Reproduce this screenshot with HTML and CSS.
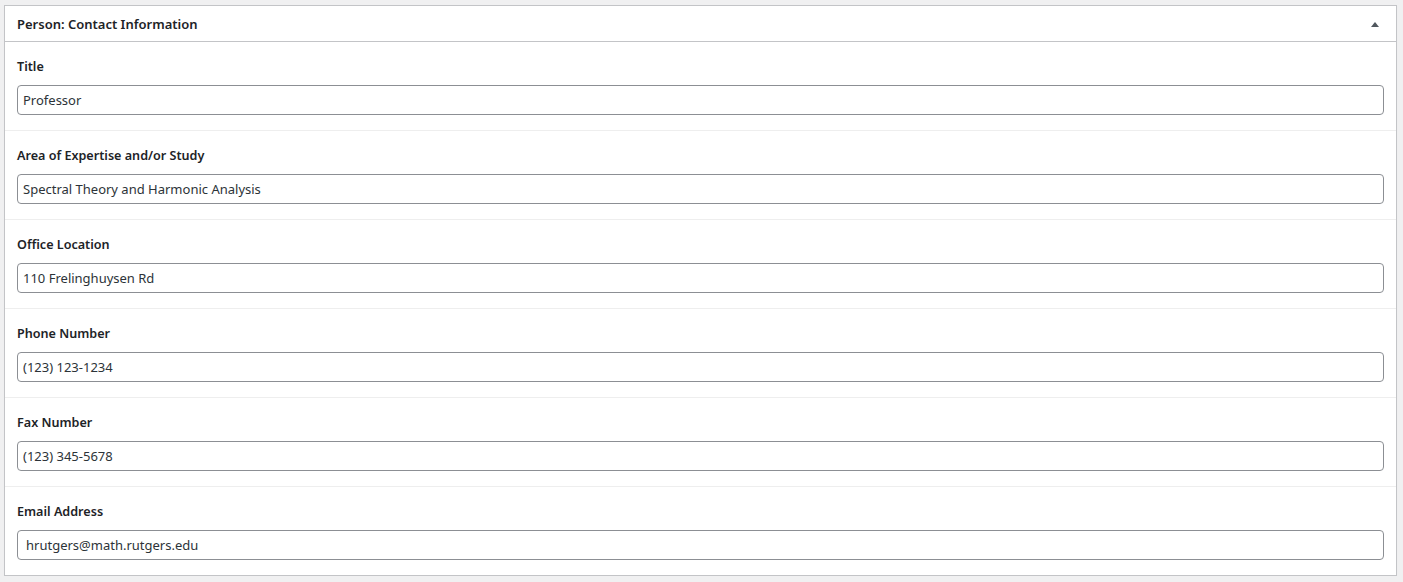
FILE: index.html
```html
<!DOCTYPE html>
<html lang="en">
<head>
<meta charset="utf-8">
<title>Person: Contact Information</title>
<link rel="stylesheet" href="styles.css">
</head>
<body>
<div class="postbox">
  <div class="postbox-header">
    <h2 class="hndle">Person: Contact Information</h2>
    <button class="toggle" type="button" aria-label="Toggle panel">
      <svg width="8" height="5" viewBox="0 0 8 5"><path d="M0 5 L4 0 L8 5 Z" fill="#50575e"/></svg>
    </button>
  </div>
  <div class="inside">
    <div class="field">
      <div class="label">Title</div>
      <input class="text" type="text" value="Professor">
    </div>
    <div class="field">
      <div class="label">Area of Expertise and/or Study</div>
      <input class="text" type="text" value="Spectral Theory and Harmonic Analysis">
    </div>
    <div class="field">
      <div class="label">Office Location</div>
      <input class="text" type="text" value="110 Frelinghuysen Rd">
    </div>
    <div class="field">
      <div class="label">Phone Number</div>
      <input class="text" type="text" value="(123) 123-1234">
    </div>
    <div class="field">
      <div class="label">Fax Number</div>
      <input class="text" type="text" value="(123) 345-5678">
    </div>
    <div class="field">
      <div class="label">Email Address</div>
      <input class="text email" type="email" value="hrutgers@math.rutgers.edu">
    </div>
  </div>
</div>
</body>
</html>
```

FILE: styles.css
```css
html, body {
  margin: 0;
  padding: 0;
  background: #f0f0f1;
}
body {
  padding: 5px 6px 0 4px;
  font-family: "Noto Sans", "Open Sans", sans-serif;
  color: #1d2327;
}
.postbox {
  background: #fff;
  border: 1px solid #c3c4c7;
  box-shadow: 0 1px 1px rgba(0,0,0,0.04);
}
.postbox-header {
  box-sizing: border-box;
  height: 36px;
  border-bottom: 1px solid #c3c4c7;
  display: flex;
  align-items: center;
  justify-content: space-between;
  padding: 2px 11px 0 12px;
}
.hndle {
  margin: 0;
  font-size: 13px;
  font-weight: 600;
  line-height: 1.4;
  color: #1d2327;
}
.toggle {
  border: 0;
  background: none;
  padding: 0;
  width: 20px;
  height: 20px;
  display: flex;
  align-items: center;
  justify-content: center;
}
.field {
  padding: 15px 12px;
  border-top: 1px solid #eeeeee;
}
.field:first-child {
  border-top: 0;
}
.label {
  font-size: 12.6px;
  font-weight: 600;
  line-height: 18px;
  padding-top: 1px;
  margin-bottom: 9px;
  color: #1d2327;
}
.text {
  display: block;
  box-sizing: border-box;
  width: 100%;
  height: 30px;
  margin: 0;
  padding: 0 5px;
  border: 1px solid #8c8f94;
  border-radius: 4px;
  font-family: "Noto Sans", "Open Sans", sans-serif;
  font-size: 13px;
  color: #2c3338;
  background: #fff;
}
.text.email {
  padding: 0 8px;
}
```
